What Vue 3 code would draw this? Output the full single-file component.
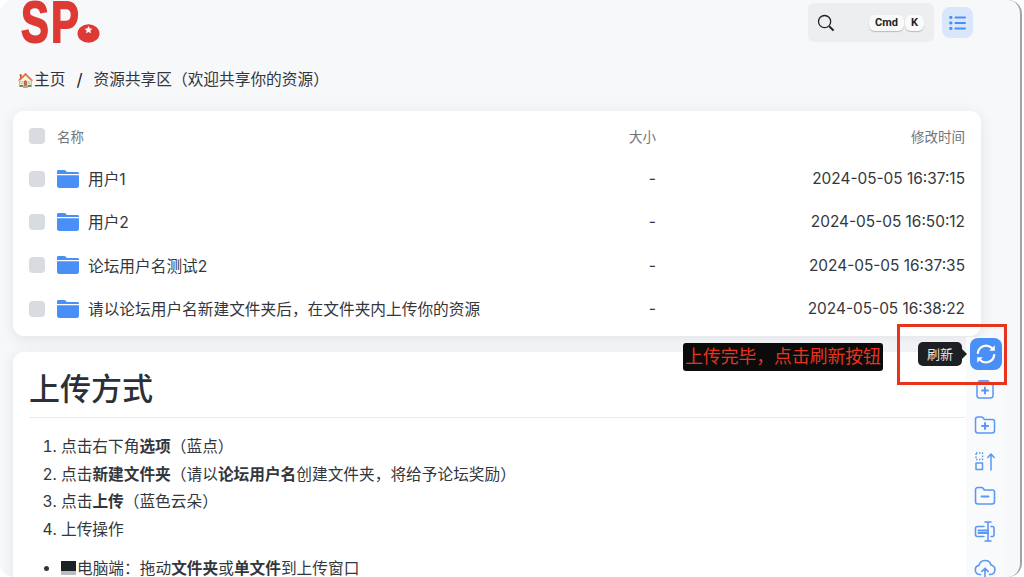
<script setup>
const rows = [
  { name: '用户1', time: '2024-05-05 16:37:15' },
  { name: '用户2', time: '2024-05-05 16:50:12' },
  { name: '论坛用户名测试2', time: '2024-05-05 16:37:35' },
  { name: '请以论坛用户名新建文件夹后，在文件夹内上传你的资源', time: '2024-05-05 16:38:22' }
]
</script>

<template>
  <div class="page">
    <header class="top">
      <div class="logo">
        <span class="logo-text">SP</span>
        <svg class="tomato" width="23" height="19" viewBox="0 0 23 19">
          <ellipse cx="11.500" cy="9.500" rx="11" ry="9.300" fill="#dd3a35" />
          <path d="M11.500 2l1.200 2.500 2.700.3-2 1.800.6 2.600-2.500-1.300-2.500 1.300.6-2.600-2-1.800 2.700-.3z" fill="#fff" />
        </svg>
      </div>
      <div class="tools">
        <div class="search">
          <svg width="20" height="20" viewBox="0 0 20 20" fill="none" stroke="#222" stroke-width="1.300">
            <circle cx="8.600" cy="8.600" r="6.100" />
            <path d="M13.200 13.200l4.400 4.400" stroke-width="2" />
          </svg>
          <span class="keys"><kbd>Cmd</kbd><kbd>K</kbd></span>
        </div>
        <button class="menu-btn">
          <svg width="20" height="20" viewBox="0 0 20 20" fill="none" stroke="#4a8ff5" stroke-width="2" stroke-linecap="round">
            <path d="M7.500 4.500h9.500M7.500 10h9.500M7.500 15.500h9.500" />
            <path d="M2.500 4.500h.6M2.500 10h.6M2.500 15.500h.6" stroke-width="2.800" />
          </svg>
        </button>
      </div>
    </header>

    <nav class="crumbs">
      <span><span class="home">🏠</span>主页</span>
      <span class="sep">/</span>
      <span>资源共享区（欢迎共享你的资源）</span>
    </nav>

    <section class="card table">
      <div class="row head">
        <span class="check"></span>
        <span class="c-name">名称</span>
        <span class="c-size">大小</span>
        <span class="c-time">修改时间</span>
      </div>
      <div v-for="r in rows" :key="r.name" class="row">
        <span class="check"></span>
        <span class="c-name">
          <svg width="24" height="20" viewBox="0 0 24 20" class="folder">
            <path d="M1 4.200V2.600C1 1.600 1.700 1 2.600 1h5.600c.6 0 1 .2 1.400.6l1.300 1.500h10.500c1 0 1.600.7 1.600 1.600v.2H1z" fill="#4a8ff5" />
            <path d="M1 6.200h22v10.600c0 1.200-.9 2.200-2.200 2.200H3.200C1.900 19 1 18 1 16.800z" fill="#4a8ff5" />
          </svg>
          {{ r.name }}
        </span>
        <span class="c-size">-</span>
        <span class="c-time val">{{ r.time }}</span>
      </div>
    </section>

    <section class="card doc">
      <h1>上传方式</h1>
      <ol>
        <li>点击右下角<b>选项</b>（蓝点）</li>
        <li>点击<b>新建文件夹</b>（请以<b>论坛用户名</b>创建文件夹，将给予论坛奖励）</li>
        <li>点击<b>上传</b>（蓝色云朵）</li>
        <li>上传操作</li>
      </ol>
      <ul>
        <li><span class="pc"></span>电脑端：拖动<b>文件夹</b>或<b>单文件</b>到上传窗口</li>
      </ul>
    </section>

    <div class="note">上传完毕，点击刷新按钮</div>
    <div class="redbox"></div>

    <aside class="fab">
      <div class="fab-strip"></div>
      <div class="tip">刷新</div>
      <button class="refresh">
        <svg width="24" height="24" viewBox="0 0 24 24" fill="none" stroke="#fff" stroke-width="2.200" stroke-linecap="round">
          <path d="M3.800 11A8.300 8.300 0 0 1 17.600 5.800" />
          <path d="M20.200 13A8.300 8.300 0 0 1 6.400 18.200" />
          <path d="M20.800 3.200v5.600h-5.600zM3.200 20.800v-5.600h5.600z" fill="#fff" stroke="none" />
        </svg>
      </button>
      <svg class="ic" width="22" height="22" viewBox="0 0 22 22" fill="none" stroke="#5b97f4" stroke-width="1.500" stroke-linejoin="round" stroke-linecap="round">
        <path d="M3 5.500C3 4 4 3 5.500 3h9.700L19 6.600v10c0 1.400-1 2.400-2.400 2.400H5.400C4 19 3 18 3 16.600z" />
        <path d="M5 1.800h9" />
        <path d="M11 8.500v6M8 11.500h6" stroke-width="2" />
      </svg>
      <svg class="ic" width="22" height="22" viewBox="0 0 22 22" fill="none" stroke="#5b97f4" stroke-width="1.500" stroke-linejoin="round" stroke-linecap="round">
        <path d="M1.500 5.500C1.500 4.200 2.400 3 3.800 3h3.700c.7 0 1.200.3 1.600.8l1.200 1.700h8.100c1.200 0 2.100 1 2.100 2.200v8.800c0 1.400-1 2.500-2.400 2.500H4c-1.400 0-2.500-1.100-2.500-2.500z" />
        <path d="M11 9v6M8 12h6" stroke-width="2" />
      </svg>
      <svg class="ic" width="22" height="22" viewBox="0 0 22 22" fill="none" stroke="#5b97f4" stroke-width="1.500" stroke-linecap="round" stroke-linejoin="round">
        <rect x="2" y="3" width="6.500" height="6.500" stroke-dasharray="1.500 1.500" stroke-linecap="butt" />
        <rect x="2" y="13" width="6.500" height="6.500" />
        <path d="M17 20V4M13.800 7.500L17 4l3.200 3.500" />
      </svg>
      <svg class="ic" width="22" height="22" viewBox="0 0 22 22" fill="none" stroke="#5b97f4" stroke-width="1.600" stroke-linejoin="round" stroke-linecap="round">
        <path d="M1.500 5C1.500 3.700 2.400 2.500 3.800 2.500h3.700c.7 0 1.200.3 1.600.8L10.300 5h8.100c1.200 0 2.100 1 2.100 2.200v9.300c0 1.400-1 2.500-2.400 2.500H4c-1.400 0-2.500-1.100-2.500-2.500z" />
        <path d="M7.500 11.500h7" stroke-width="2" />
      </svg>
      <svg class="ic" width="22" height="22" viewBox="0 0 22 22" fill="none" stroke="#5b97f4" stroke-width="1.600" stroke-linejoin="round" stroke-linecap="round">
        <path d="M10 6.500H3.500C2.400 6.500 1.500 7.400 1.500 8.500v6c0 1.100.9 2 2 2H10M17 6.500h1.500c1 0 1.500.9 1.500 2v6c0 1.100-.5 2-1.500 2H17" />
        <path d="M4.500 10.500h9.500M4.500 13h9.500" stroke-width="2" />
        <path d="M11 2h6M14 2v19M11 21h6" />
      </svg>
      <svg class="ic" width="22" height="22" viewBox="0 0 22 22" fill="none" stroke="#5b97f4" stroke-width="1.600" stroke-linejoin="round" stroke-linecap="round">
        <path d="M6.500 17.500H5.600A4.600 4.600 0 0 1 5 8.400 6.200 6.200 0 0 1 17 8a4.800 4.800 0 0 1-.5 9.500h-1" />
        <path d="M11 20.500V11.500M7.800 14.500L11 11.300l3.200 3.200" />
      </svg>
    </aside>
  </div>
</template>

<style>
html, body { margin: 0; background: #fff; overflow: hidden; }
</style>

<style scoped>
.page {
  position: relative;
  width: 1022px;
  height: 577px;
  box-sizing: border-box;
  padding: 0 39px 0 13px;
  overflow: hidden;
  background: #f7f8fa;
  border-radius: 14px;
  border-right: 2px solid #a3a3a3;
  color: #33373d;
  font-family: Inter, "Noto Sans CJK SC", sans-serif;
  font-size: 15.700px;
}
.top {
  display: flex;
  justify-content: space-between;
  height: 62px;
}
.logo {
  display: flex;
  align-items: flex-end;
  height: 44px;
  margin-left: 7.500px;
}
.logo-text {
  display: block;
  font-family: "Liberation Sans", sans-serif;
  font-weight: 700;
  font-size: 58px;
  line-height: 44px;
  letter-spacing: 3px;
  color: #dd3a35;
  -webkit-text-stroke: 1.800px #dd3a35;
  transform: scaleX(0.72);
  transform-origin: left center;
  margin-right: -27px;
}
.tomato { margin-bottom: 1px; }
.tools {
  display: flex;
  gap: 8px;
  padding-top: 3px;
  height: 39px;
  margin-right: 8px;
}
.search {
  display: flex;
  align-items: center;
  justify-content: space-between;
  box-sizing: border-box;
  width: 126px;
  height: 39px;
  padding: 0 10px 0 8px;
  border-radius: 6px;
  background: #eceef0;
}
.keys { display: flex; gap: 1px; }
kbd {
  padding: 0 6px;
  height: 16px;
  line-height: 16px;
  border-radius: 6px;
  background: #fafafa;
  box-shadow: 0 1px 1px #bbb;
  font-family: Roboto, sans-serif;
  font-weight: 700;
  font-size: 11px;
  color: #222;
}
.menu-btn {
  display: flex;
  align-items: center;
  justify-content: center;
  width: 31px;
  height: 31px;
  margin-top: 4px;
  padding: 0;
  border: 0;
  border-radius: 8px;
  background: #dae6fb;
}
.crumbs {
  display: flex;
  gap: 10px;
  height: 49px;
  padding-left: 4px;
  line-height: 36px;
  font-size: 15.700px;
}
.home { font-size: 13.700px; }
.sep { color: #222; padding: 0 1px; font-size: 17px; }
.card {
  background: #fff;
  border-radius: 11px;
  box-shadow: 0 3px 14px rgba(30, 40, 60, 0.1);
}
.table { padding: 4px 16px 6px; }
.row {
  display: grid;
  grid-template-columns: 28px 1fr 100px 309px;
  align-items: center;
  height: 43.300px;
}
.head { color: #70757c; font-size: 13.500px; height: 42px; }
.check {
  width: 16px;
  height: 16px;
  border-radius: 4px;
  background: #d8dbe0;
}
.c-name { display: flex; align-items: center; white-space: nowrap; }
.folder { margin: 0 8px 0 -1px; flex: none; }
.c-size, .c-time { text-align: right; }
.val { font-size: 15.400px; }
.doc {
  height: 300px;
  margin-top: 16px;
  padding: 17px 16px 0;
  box-sizing: border-box;
}
h1 {
  margin: 0;
  padding-bottom: 8px;
  border-bottom: 1px solid #e8eaed;
  font-size: 31px;
  font-weight: 500;
  line-height: 40px;
  color: #2c3036;
}
ol, ul { margin: 0; padding-left: 32px; line-height: 27.500px; font-size: 15.700px; }
ol { margin-top: 15px; }
ul { margin-top: 12px; }
b { font-weight: 700; }
.pc {
  display: inline-block;
  width: 15px;
  height: 14px;
  margin-right: 1px;
  vertical-align: -1px;
  background: linear-gradient(#1c2126 75%, #b9bdc2 75%);
}
.note {
  position: absolute;
  left: 683px;
  top: 343px;
  width: 200px;
  height: 28px;
  border-radius: 3px;
  background: #0b0b0c;
  color: #e8341c;
  font-size: 17.800px;
  line-height: 28px;
  text-align: center;
  white-space: nowrap;
}
.redbox {
  position: absolute;
  left: 897px;
  top: 324px;
  width: 104px;
  height: 55px;
  border: 3px solid #e8331f;
  z-index: 3;
}
.fab {
  position: absolute;
  right: 0;
  top: 0;
  width: 0;
  height: 100%;
}
.fab-strip {
  position: absolute;
  right: 15px;
  top: 337px;
  width: 39px;
  height: 240px;
  background: #f9fafc;
}
.tip {
  position: absolute;
  left: -102px;
  top: 342px;
  width: 44px;
  height: 24px;
  border-radius: 5px;
  background: #1c1f24;
  color: #e8e8e8;
  font-size: 13px;
  line-height: 24px;
  text-align: center;
}
.tip::after {
  content: "";
  position: absolute;
  right: -5px;
  top: 7px;
  border-left: 5px solid #1c1f24;
  border-top: 5px solid transparent;
  border-bottom: 5px solid transparent;
}
.refresh {
  position: absolute;
  left: -50px;
  top: 338px;
  display: flex;
  align-items: center;
  justify-content: center;
  width: 32px;
  height: 32px;
  padding: 0;
  border: 0;
  border-radius: 8px;
  background: #4a8ff5;
}
.ic { position: absolute; left: -46px; }
.fab > svg:nth-of-type(1) { top: 379px; }
.fab > svg:nth-of-type(2) { top: 414px; }
.fab > svg:nth-of-type(3) { top: 450px; }
.fab > svg:nth-of-type(4) { top: 485px; }
.fab > svg:nth-of-type(5) { top: 520px; }
.fab > svg:nth-of-type(6) { top: 557px; }
</style>
